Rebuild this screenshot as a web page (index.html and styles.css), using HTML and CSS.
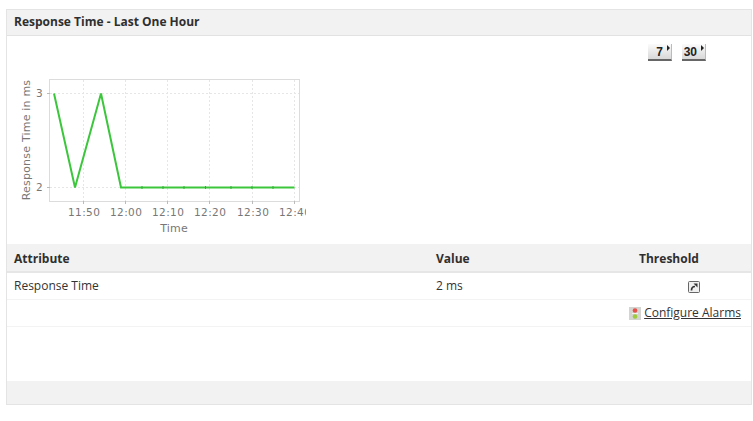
FILE: index.html
```html
<!DOCTYPE html>
<html lang="en">
<head>
<meta charset="utf-8">
<title>Response Time</title>
<link rel="stylesheet" href="styles.css">
</head>
<body>
<section class="panel">
  <h2 class="panel-title">Response Time - Last One Hour</h2>
  <div class="range-row">
    <button class="range-btn" type="button">7<svg class="caret" width="3" height="6" viewBox="0 0 3 6"><path d="M0 0l3 3-3 3z"/></svg></button>
    <button class="range-btn" type="button">30<svg class="caret" width="3" height="6" viewBox="0 0 3 6"><path d="M0 0l3 3-3 3z"/></svg></button>
  </div>
  <svg class="chart" width="299" height="165" viewBox="1 0 299 165">
    <g class="grid">
      <path d="M77.500 1V122M119.500 1V122M161.500 1V122M203.500 1V122M246.500 1V122M288.500 1V122M44 14.500H293M44 108.500H293"/>
    </g>
    <rect class="plot" x="43.500" y="0.500" width="250" height="122"/>
    <path class="tick" d="M41 14.500h3M41 108.500h3M77.500 122v3M119.500 122v3M161.500 122v3M203.500 122v3M246.500 122v3M288.500 122v3"/>
    <polyline class="series" points="48,14.500 69,108.500 95,14.500 115,108.500 136,108.500 157,108.500 178,108.500 199.500,108.500 225,108.500 246,108.500 267,108.500 288.500,108.500"/>
    <g class="points">
      <path d="M136 107v3M157 107v3M178 107v3M199.500 107v3M225 107v3M246 107v3M267 107v3"/>
    </g>
    <text class="axis" x="37" y="18" text-anchor="end">3</text>
    <text class="axis" x="37" y="112" text-anchor="end">2</text>
    <text class="axis" x="62" y="137">11:50</text>
    <text class="axis" x="104" y="137">12:00</text>
    <text class="axis" x="146" y="137">12:10</text>
    <text class="axis" x="188" y="137">12:20</text>
    <text class="axis" x="231" y="137">12:30</text>
    <text class="axis" x="273" y="137">12:40</text>
    <text class="label" x="168" y="153" text-anchor="middle">Time</text>
    <text class="label" transform="translate(24 61) rotate(-90)" text-anchor="middle">Response Time in ms</text>
  </svg>
  <table class="attrs">
    <thead>
      <tr><th class="col-attr">Attribute</th><th class="col-value">Value</th><th class="col-thresh">Threshold</th></tr>
    </thead>
    <tbody>
      <tr>
        <td>Response Time</td>
        <td>2 ms</td>
        <td class="cell-icon">
          <svg class="edit-icon" width="12" height="12" viewBox="0 0 12 12"><rect x="0.500" y="0.500" width="11" height="11" rx="1" fill="#f0f0f0" stroke="#666"/><path d="M3.500 9.500c0-2.500 1-4 3.500-4" fill="none" stroke="#333" stroke-width="1.700"/><path d="M5.500 2.500H9.500V6.500z" fill="#333"/></svg>
        </td>
      </tr>
      <tr>
        <td></td>
        <td></td>
        <td class="cell-link">
          <svg class="alarm-icon" width="12" height="13" viewBox="0 0 12 13"><rect width="12" height="13" fill="#d4d4d0"/><circle cx="6" cy="3.500" r="2.300" fill="#e8504a"/><rect x="3" y="6" width="6" height="1" fill="#f3f3f0"/><circle cx="6" cy="9.500" r="2.300" fill="#9ecb3c"/></svg><a href="#">Configure Alarms</a>
        </td>
      </tr>
    </tbody>
  </table>
  <div class="spacer"></div>
  <div class="panel-foot"></div>
</section>
</body>
</html>
```
FILE: styles.css
```css
* { box-sizing: border-box; }
html, body { margin: 0; padding: 0; background: #fff; }
body {
  width: 753px;
  height: 421px;
  overflow: hidden;
  padding: 9px 1px 0 6px;
  font-family: "Open Sans", "Liberation Sans", sans-serif;
  font-size: 12px;
  color: #333;
}
.panel {
  border: 1px solid #e4e4e4;
  height: 396px;
  display: flex;
  flex-direction: column;
}
.panel-title {
  margin: 0;
  height: 26px;
  padding: 0 7px;
  background: #f2f2f2;
  border-bottom: 1px solid #e2e2e2;
  font-size: 12px;
  font-weight: 700;
  line-height: 24px;
  color: #2f2f2f;
}
.range-row {
  display: flex;
  justify-content: flex-end;
  gap: 10px;
  height: 43px;
  padding: 8px 45px 0 0;
}
.range-btn {
  position: relative;
  width: 24px;
  height: 17px;
  padding: 1px 8px 0 0;
  border: 0;
  border-right: 1px solid #bbb;
  border-bottom: 2px solid #666;
  background: linear-gradient(#fbfbfb, #d8d8d8);
  font-family: "Liberation Sans", sans-serif;
  font-size: 12px;
  font-weight: 700;
  line-height: 15px;
  color: #222;
  text-align: right;
}
.caret {
  position: absolute;
  right: 1px;
  top: 1px;
  fill: #222;
}
.chart {
  display: block;
  flex: none;
}
.grid path { fill: none; stroke: #e6e6e6; stroke-dasharray: 2 2; }
.plot { fill: none; stroke: #dcdcdc; }
.tick { fill: none; stroke: #bbb; }
.series { fill: none; stroke: #3cc63c; stroke-width: 2; stroke-linejoin: miter; }
.points path { fill: none; stroke: #2faf2f; }
.axis { font-family: "DejaVu Sans", sans-serif; font-size: 10.500px; fill: #777; letter-spacing: 0.400px; }
.label { font-family: "DejaVu Sans", sans-serif; font-size: 11px; fill: #777; letter-spacing: 0.200px; }
.attrs {
  width: 100%;
  border-collapse: collapse;
  table-layout: fixed;
}
.attrs th {
  height: 28px;
  padding: 1px 0 0 7px;
  background: #f2f2f2;
  border-bottom: 2px solid #e6e6e6;
  text-align: left;
  font-weight: 700;
  color: #2f2f2f;
}
.attrs td {
  height: 27px;
  padding: 0 0 0 7px;
  border-bottom: 1px solid #f3f3f3;
  vertical-align: middle;
}
.col-attr { width: 422px; }
.col-value { width: 195px; }
.attrs th.col-thresh { padding-left: 15px; }
.attrs td.cell-icon { padding: 3px 0 0 64px; }
.attrs td.cell-link { padding: 0 10px 0 0; text-align: right; white-space: nowrap; }
.edit-icon { display: block; }
.alarm-icon { vertical-align: -3px; margin-right: 3px; }
.cell-link a { color: #333; text-decoration: underline; }
.spacer { flex: 1; }
.panel-foot {
  height: 23px;
  background: #f2f2f2;
}
```
